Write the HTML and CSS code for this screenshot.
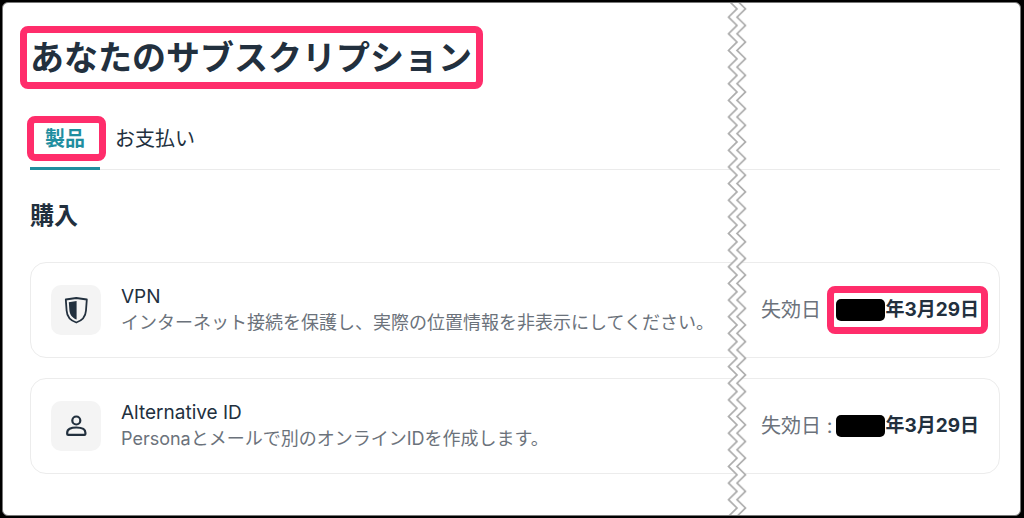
FILE: index.html
```html
<!DOCTYPE html>
<html lang="ja">
<head>
<meta charset="utf-8">
<meta name="viewport" content="width=device-width, initial-scale=1">
<title>あなたのサブスクリプション</title>
<link rel="stylesheet" href="styles.css">
</head>
<body>
<main class="panel">
  <h1 class="title"><span class="mark mark-title">あなたのサブスクリプション</span></h1>

  <div class="tabs" role="tablist">
    <button class="tab tab-active" type="button" role="tab" aria-selected="true"><span class="mark mark-tab">製品</span></button>
    <button class="tab" type="button" role="tab" aria-selected="false">お支払い</button>
  </div>

  <h2 class="subtitle">購入</h2>

  <section class="cards">
    <article class="card">
      <div class="icon">
        <svg width="28" height="28" viewBox="0 0 28 28" aria-hidden="true">
          <path d="M14.300 2 24.800 3.500 24 14.500C23.600 20.500 19.500 24.800 14.300 26.500 9 24.800 5 20.500 4.600 14.500L3.800 3.500Z" fill="none" stroke="#22303e" stroke-width="1.800" stroke-linejoin="round"/>
          <path d="M14.600 5v18.600C10.300 21.800 7.700 18.600 7.400 14.200L6.800 6.200Z" fill="#22303e"/>
        </svg>
      </div>
      <div class="info">
        <h3 class="name">VPN</h3>
        <p class="desc">インターネット接続を保護し、実際の位置情報を非表示にしてください。</p>
      </div>
      <p class="expiry"><span class="label">失効日 :</span><strong class="date mark mark-date"><span class="redacted"></span>年3月29日</strong></p>
    </article>

    <article class="card">
      <div class="icon">
        <svg width="28" height="28" viewBox="0 0 28 28" fill="none" stroke="#22303e" stroke-width="2.200" aria-hidden="true">
          <circle cx="14.300" cy="8.500" r="4"/>
          <path d="M5.200 20.800c0-3.600 3.600-5.300 9.100-5.300s9.100 1.700 9.100 5.300v1.100c0 .6-.4 1-1 1H6.200c-.6 0-1-.4-1-1Z"/>
        </svg>
      </div>
      <div class="info">
        <h3 class="name">Alternative ID</h3>
        <p class="desc">Personaとメールで別のオンラインIDを作成します。</p>
      </div>
      <p class="expiry"><span class="label">失効日 :</span><strong class="date"><span class="redacted"></span>年3月29日</strong></p>
    </article>
  </section>

  <svg class="tear" aria-hidden="true">
    <defs>
      <pattern id="zigzag" width="20" height="16.640" patternUnits="userSpaceOnUse">
        <path d="M10 -10.500 1.500 -2.500 10 5.800 1.500 14.140 10 22.400H18.500V22.400L10 14.140 18.500 5.800 10 -2.500 18.500 -10.500Z" fill="#fff"/>
        <path d="M10 -10.840 1.500 -2.500 10 5.800 1.500 14.140 10 22.440M18.500 -10.840 10 -2.500 18.500 5.800 10 14.140 18.500 22.440" fill="none" stroke="#adadad" stroke-width="1.700"/>
      </pattern>
    </defs>
    <rect width="20" height="100%" fill="url(#zigzag)"/>
  </svg>
</main>
</body>
</html>
```
FILE: styles.css
```css
* {
  box-sizing: border-box;
}

body {
  margin: 0;
  min-height: 100vh;
  display: flex;
  padding: 2px 3px 2px 2px;
  background: #000;
  color: #22303e;
  font-family: Inter, "Noto Sans CJK JP", sans-serif;
  font-size: 20px;
}

h1, h2, h3, p {
  margin: 0;
}

.panel {
  position: relative;
  flex: 1;
  min-width: 0;
  padding: 31px 20px 40px 27px;
  background: #fff;
  border: 1px solid #777;
  border-radius: 6px;
}

.title {
  font-size: 34px;
  line-height: 48px;
}

.mark {
  position: relative;
}

.mark::after {
  content: "";
  position: absolute;
  border: 7px solid #ff2d6b;
  border-radius: 8px;
  pointer-events: none;
}

.mark-title,
.mark-tab {
  display: inline-block;
}

.mark-title::after {
  inset: -8px -11px -7px -10px;
}

.mark-tab::after {
  inset: -8px -21px -7px -18px;
}

.mark-date::after {
  inset: -9px;
}

.tabs {
  display: flex;
  margin-top: 42px;
  border-bottom: 1px solid #ebebeb;
}

.tab {
  margin: 0 0 -1px;
  padding: 0 15px 13px;
  border: 0;
  border-bottom: 3px solid transparent;
  background: none;
  color: inherit;
  font: inherit;
  line-height: 30px;
}

.tab-active {
  border-bottom-color: #1f8e9f;
  color: #1f8e9f;
  font-weight: 700;
}

.subtitle {
  margin-top: 28px;
  font-size: 24px;
  line-height: 36px;
}

.cards {
  display: grid;
  gap: 20px;
  margin-top: 28px;
}

.card {
  display: flex;
  align-items: center;
  gap: 20px;
  padding: 20px;
  min-height: 96px;
  border: 1px solid #ececec;
  border-radius: 16px;
}

.icon {
  display: grid;
  place-items: center;
  flex: none;
  width: 50px;
  height: 50px;
  border-radius: 10px;
  background: #f4f4f4;
}

.info {
  flex: 1;
  min-width: 0;
}

.name {
  font-size: 19px;
  font-weight: 400;
  line-height: 26px;
}

.desc {
  color: #6b727b;
  font-size: 18px;
  line-height: 26px;
}

.expiry {
  display: flex;
  align-items: center;
  gap: 4px;
  line-height: 30px;
  white-space: nowrap;
}

.label {
  color: #6b727b;
}

.date {
  display: flex;
  align-items: center;
  font-size: 19px;
}

.redacted {
  width: 49px;
  height: 22px;
  border-radius: 5px;
  background: #000;
}

.tear {
  position: absolute;
  top: 0;
  right: 273px;
  width: 20px;
  height: 100%;
}
```
